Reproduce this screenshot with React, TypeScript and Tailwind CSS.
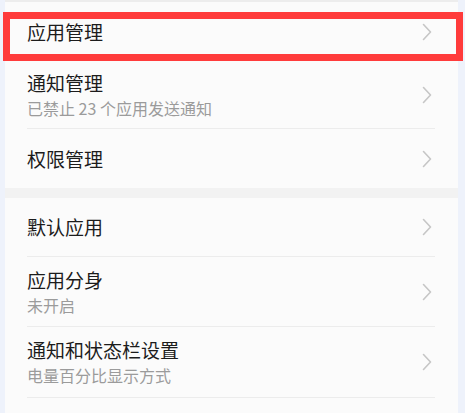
import React from "react";

type Item = {
  title: string;
  desc?: string;
  h: string;
  divider?: boolean;
};

const groupA: Item[] = [
  { title: "应用管理", h: "h-[59px]" },
  { title: "通知管理", desc: "已禁止 23 个应用发送通知", h: "h-[68px]", divider: true },
  { title: "权限管理", h: "h-[59px]" },
];

const groupB: Item[] = [
  { title: "默认应用", h: "h-[59px]", divider: true },
  { title: "应用分身", desc: "未开启", h: "h-[70px]", divider: true },
  { title: "通知和状态栏设置", desc: "电量百分比显示方式", h: "h-[71px]", divider: true },
];

function Chevron() {
  return (
    <svg width="10" height="18" viewBox="0 0 10 18" className="mr-[3px] shrink-0">
      <polyline
        points="1.5,1.5 8.5,9 1.5,16.5"
        fill="none"
        stroke="#c6c6c6"
        strokeWidth="1.6"
        strokeLinecap="round"
        strokeLinejoin="round"
      />
    </svg>
  );
}

function Row({ item }: { item: Item }) {
  return (
    <div className="pl-[22px] pr-[23px]">
      <div
        className={`${item.h} flex items-center justify-between ${
          item.divider ? "border-b border-[#ececec]" : ""
        }`}
      >
        <div className="flex flex-col">
          <span className="text-[19px] leading-[24px] text-[#1c1c1c]">{item.title}</span>
          {item.desc && (
            <span className="mt-[2px] text-[16px] leading-[22px] text-[#9b9b9b]">{item.desc}</span>
          )}
        </div>
        <Chevron />
      </div>
    </div>
  );
}

export default function App() {
  return (
    <div
      className="relative w-[465px] h-[413px] overflow-hidden bg-[#eef2fb] pl-[5px] pr-[7px]"
      style={{ fontFamily: '"Noto Sans CJK SC", "Noto Sans", sans-serif' }}
    >
      <div className="h-full bg-[#fbfbfb]">
        <div className="h-[2px] bg-[#ededed]" />
        {groupA.map((item) => (
          <Row key={item.title} item={item} />
        ))}
        <div className="h-[10px] bg-[#f2f2f2]" />
        {groupB.map((item) => (
          <Row key={item.title} item={item} />
        ))}
      </div>
      {/* highlight annotation */}
      <div className="absolute left-[3px] top-[12px] w-[460px] h-[49px] border-[7px] border-[#ff3b3b]" />
    </div>
  );
}
